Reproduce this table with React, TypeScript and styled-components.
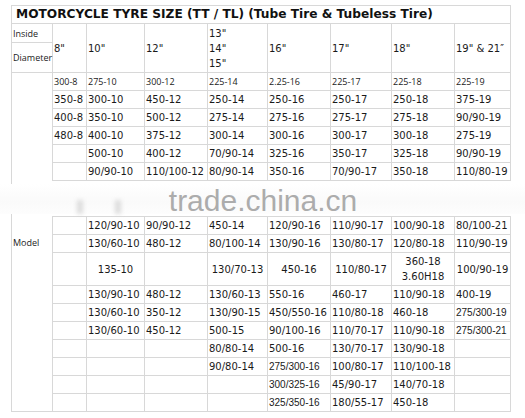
import React from "react";
import styled, { createGlobalStyle } from "styled-components";

const GlobalStyle = createGlobalStyle`
  html, body { margin: 0; padding: 0; background: #ffffff; }
  body { font-family: "DejaVu Sans", Verdana, sans-serif; color: #161616; }
`;

const Page = styled.div`
  width: 525px;
  height: 418px;
  padding: 5px 0 0 11px;
  box-sizing: border-box;
  overflow: hidden;
`;

const Table = styled.table`
  border-collapse: collapse;
  table-layout: fixed;
  width: 499px;
  border: 1px solid #d8d8d8;
`;

const TitleCell = styled.th`
  border: 1px solid #d8d8d8;
  height: 17px;
  padding: 0 0 0 4px;
  text-align: left;
  font-family: "DejaVu Sans", Verdana, sans-serif;
  font-weight: bold;
  font-size: 12.2px;
  line-height: 17px;
  color: #111;
  white-space: nowrap;
`;

const LabelCell = styled.td<{ $h: number }>`
  border: 1px solid #d8d8d8;
  height: ${(p) => p.$h}px;
  padding: 0 1px;
  font-family: "Open Sans", "Noto Sans", sans-serif;
  font-size: 9px;
  color: #222;
  vertical-align: middle;
  white-space: nowrap;
`;

const SizeHead = styled.td`
  border: 1px solid #d8d8d8;
  padding: 0 1px;
  font-family: "DejaVu Sans", Verdana, sans-serif;
  font-size: 10px;
  line-height: 15px;
  color: #1a1a1a;
  vertical-align: middle;
  white-space: nowrap;
`;

type CellFont = "verdana" | "open" | "arial";

const fonts: Record<CellFont, string> = {
  verdana: `"DejaVu Sans", Verdana, sans-serif`,
  open: `"Open Sans", "Noto Sans", sans-serif`,
  arial: `"Liberation Sans", Arial, sans-serif`,
};

const sizes: Record<CellFont, number> = { verdana: 10, open: 9, arial: 10 };

const Row = styled.tr<{ $h: number }>`
  height: ${(p) => p.$h}px;
`;

const Cell = styled.td<{ $font: CellFont; $center?: boolean }>`
  border: 1px solid #d8d8d8;
  padding: 0 1px;
  font-family: ${(p) => fonts[p.$font]};
  font-size: ${(p) => sizes[p.$font]}px;
  line-height: 15px;
  color: #1a1a1a;
  text-align: ${(p) => (p.$center ? "center" : "left")};
  vertical-align: middle;
  white-space: nowrap;
  overflow: hidden;
`;

const BandCell = styled.td`
  position: relative;
  padding: 0;
  border-left: hidden;
  border-right: hidden;
`;

const Watermark = styled.div`
  position: absolute;
  left: -53px;
  right: -16px;
  top: 3px;
  bottom: 2px;
  background: linear-gradient(180deg, #ffffff 0%, #fafafa 60%, #fdfdfd 100%);
  display: flex;
  align-items: center;
  justify-content: center;
  padding-top: 3px;
  box-sizing: border-box;
`;

const WatermarkText = styled.span`
  font-family: "Liberation Sans", Arial, sans-serif;
  font-size: 30px;
  color: #acacac;
  line-height: 1;
`;

const Smudge = styled.div<{ $x: number }>`
  position: absolute;
  left: ${(p) => p.$x}px;
  bottom: 0;
  width: 6px;
  height: 14px;
  background: #cfcfcf;
  filter: blur(2px);
  opacity: 0.7;
`;

const Lines = styled.div`
  display: flex;
  flex-direction: column;
`;

const upper: string[][] = [
  ["350-8", "300-10", "450-12", "250-14", "250-16", "250-17", "250-18", "375-19"],
  ["400-8", "350-10", "500-12", "275-14", "275-16", "275-17", "275-18", "90/90-19"],
  ["480-8", "400-10", "375-12", "300-14", "300-16", "300-17", "300-18", "275-19"],
  ["", "500-10", "400-12", "70/90-14", "325-16", "350-17", "325-18", "90/90-19"],
  ["", "90/90-10", "110/100-12", "80/90-14", "350-16", "70/90-17", "350-18", "110/80-19"],
];

const firstRow = ["300-8", "275-10", "300-12", "225-14", "2.25-16", "225-17", "225-18", "225-19"];

const lowerA: string[][] = [
  ["", "120/90-10", "90/90-12", "450-14", "120/90-16", "110/90-17", "100/90-18", "80/100-21"],
  ["", "130/60-10", "480-12", "80/100-14", "130/90-16", "130/80-17", "120/80-18", "110/90-19"],
];

const tallRow: string[] = ["", "135-10", "", "130/70-13", "450-16", "110/80-17", "360-18|3.60H18", "100/90-19"];

const lowerB: string[][] = [
  ["", "130/90-10", "480-12", "130/60-13", "550-16", "460-17", "110/90-18", "400-19"],
  ["", "130/60-10", "350-12", "130/90-15", "450/550-16", "110/80-18", "460-18", "275/300-19"],
  ["", "130/60-10", "450-12", "500-15", "90/100-16", "110/70-17", "110/90-18", "275/300-21"],
  ["", "", "", "80/80-14", "500-16", "130/70-17", "130/90-18", ""],
  ["", "", "", "90/80-14", "275/300-16", "100/80-17", "110/100-18", ""],
  ["", "", "", "", "300/325-16", "45/90-17", "140/70-18", ""],
  ["", "", "", "", "325/350-16", "180/55-17", "450-18", ""],
];

const colWidths = [41, 34, 58, 63, 60, 63, 61, 63, 56];

const narrow = (v: string) => /^(275\/300|300\/325|325\/350)/.test(v);

const renderValue = (v: string) =>
  v.includes("|") ? (
    <Lines>
      {v.split("|").map((s) => (
        <span key={s}>{s}</span>
      ))}
    </Lines>
  ) : (
    v
  );

const DataRow = ({ values, font, center, h }: { values: string[]; font?: CellFont; center?: boolean; h: number }) => (
  <Row $h={h}>
    {values.map((v, i) => (
      <Cell key={i} $font={font ?? (narrow(v) ? "arial" : "verdana")} $center={center}>
        {renderValue(v)}
      </Cell>
    ))}
  </Row>
);

export default function App() {
  const headers = ['8"', '10"', '12"', '13"|14"|15"', '16"', '17"', '18"', '19" & 21\u2033'];
  const totalModelRows = 1 + upper.length + 1 + lowerA.length + 1 + lowerB.length;
  return (
    <>
      <GlobalStyle />
      <Page>
        <Table>
          <colgroup>
            {colWidths.map((w, i) => (
              <col key={i} style={{ width: w }} />
            ))}
          </colgroup>
          <tbody>
            <Row $h={18}>
              <TitleCell colSpan={9}>MOTORCYCLE TYRE SIZE (TT / TL) (Tube Tire &amp; Tubeless Tire)</TitleCell>
            </Row>
            <Row $h={19}>
              <LabelCell $h={18}>Inside</LabelCell>
              {headers.map((h) => (
                <SizeHead key={h} rowSpan={2}>
                  {renderValue(h)}
                </SizeHead>
              ))}
            </Row>
            <Row $h={30}>
              <LabelCell $h={29}>Diameter</LabelCell>
            </Row>
            <Row $h={18}>
              <LabelCell $h={17} rowSpan={totalModelRows}>
                Model
              </LabelCell>
              {firstRow.map((v, i) => (
                <Cell key={i} $font="open">
                  {v}
                </Cell>
              ))}
            </Row>
            {upper.map((r, i) => (
              <DataRow key={`u${i}`} values={r} h={18} />
            ))}
            <Row $h={36}>
              <BandCell colSpan={8}>
                <Watermark>
                  <Smudge $x={77} />
                  <Smudge $x={115} />
                  <WatermarkText>trade.china.cn</WatermarkText>
                </Watermark>
              </BandCell>
            </Row>
            {lowerA.map((r, i) => (
              <DataRow key={`a${i}`} values={r} h={18} />
            ))}
            <DataRow values={tallRow} center h={33} />
            {lowerB.map((r, i) => (
              <DataRow key={`b${i}`} values={r} h={18} />
            ))}
          </tbody>
        </Table>
      </Page>
    </>
  );
}
